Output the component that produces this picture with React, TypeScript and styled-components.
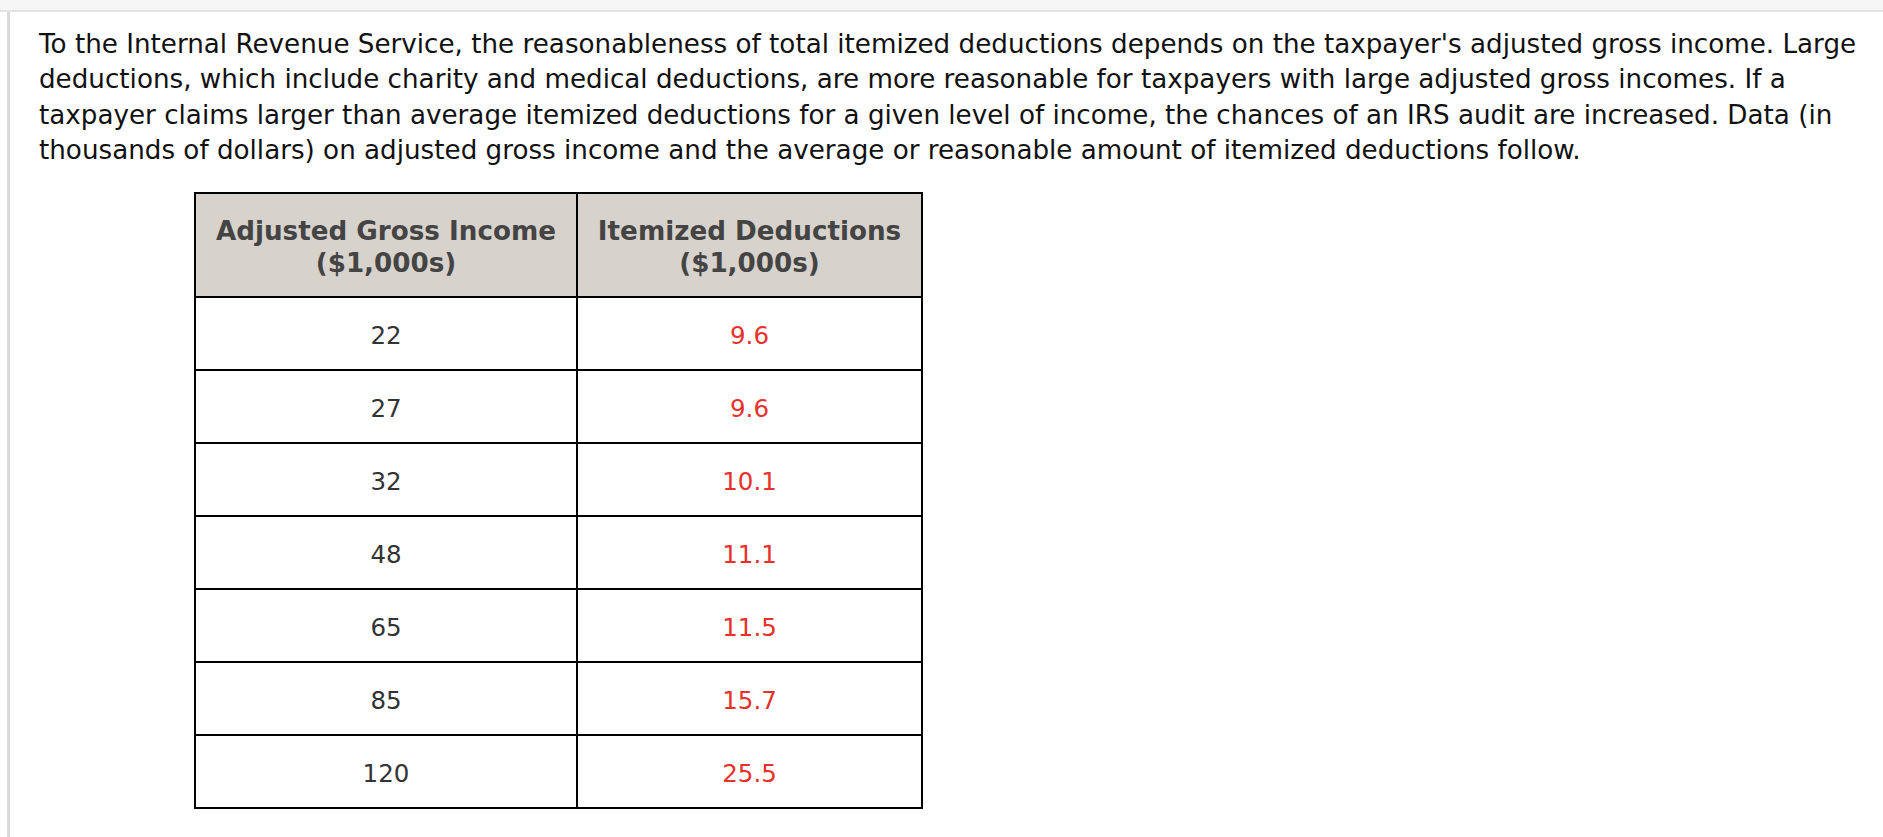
import styled, { createGlobalStyle } from "styled-components";

const GlobalStyle = createGlobalStyle`
  html, body {
    margin: 0;
    padding: 0;
    background: #ffffff;
  }
  body {
    font-family: "DejaVu Sans", Verdana, "Liberation Sans", sans-serif;
    color: #000000;
  }
`;

const TopBar = styled.div`
  height: 10px;
  background: #f5f5f5;
  border-bottom: 2px solid #e3e3e3;
`;

const Panel = styled.main`
  margin-left: 7px;
  min-height: 825px;
  box-sizing: border-box;
  border-left: 3px solid #dadada;
  padding: 15px 6px 0 29px;
`;

const Prompt = styled.p`
  margin: 0;
  font-size: 26.2px;
  line-height: 35.3px;
  color: #111111;
`;

const DataTable = styled.table`
  margin: 24px 0 0 155px;
  border-collapse: collapse;
  table-layout: fixed;
  width: 727px;
  border: 2px solid #000000;
`;

const HeadCell = styled.th`
  box-sizing: border-box;
  height: 104px;
  padding: 4px 6px 0;
  background: #d7d3cc;
  border: 2px solid #000000;
  color: #444444;
  font-size: 26.2px;
  line-height: 32px;
  font-weight: bold;
  text-align: center;
  vertical-align: middle;
`;

const Cell = styled.td<{ $tone: "plain" | "given" }>`
  box-sizing: border-box;
  height: 73px;
  padding: 3px 0 0;
  border: 2px solid #000000;
  font-size: 24.5px;
  text-align: center;
  vertical-align: middle;
  color: ${(p) => (p.$tone === "given" ? "#e8312a" : "#333333")};
`;

const rows: [string, string][] = [
  ["22", "9.6"],
  ["27", "9.6"],
  ["32", "10.1"],
  ["48", "11.1"],
  ["65", "11.5"],
  ["85", "15.7"],
  ["120", "25.5"],
];

export default function App() {
  return (
    <>
      <GlobalStyle />
      <TopBar />
      <Panel>
        <Prompt>
          To the Internal Revenue Service, the reasonableness of total itemized
          deductions depends on the taxpayer's adjusted gross income. Large
          deductions, which include charity and medical deductions, are more
          reasonable for taxpayers with large adjusted gross incomes. If a
          taxpayer claims larger than average itemized deductions for a given
          level of income, the chances of an IRS audit are increased. Data (in
          thousands of dollars) on adjusted gross income and the average or
          reasonable amount of itemized deductions follow.
        </Prompt>
        <DataTable>
          <colgroup>
            <col style={{ width: 382 }} />
            <col style={{ width: 345 }} />
          </colgroup>
          <thead>
            <tr>
              <HeadCell>
                Adjusted Gross Income
                <br />
                ($1,000s)
              </HeadCell>
              <HeadCell>
                Itemized Deductions
                <br />
                ($1,000s)
              </HeadCell>
            </tr>
          </thead>
          <tbody>
            {rows.map(([income, deduction]) => (
              <tr key={income}>
                <Cell $tone="plain">{income}</Cell>
                <Cell $tone="given">{deduction}</Cell>
              </tr>
            ))}
          </tbody>
        </DataTable>
      </Panel>
    </>
  );
}
